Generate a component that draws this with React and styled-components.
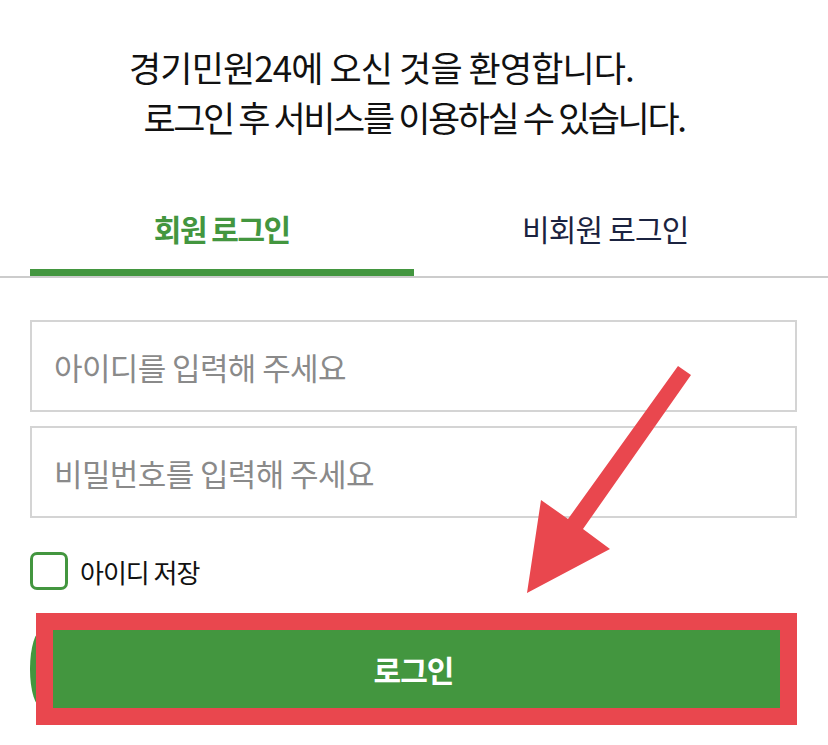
import React, { useState } from 'react';
import styled, { createGlobalStyle } from 'styled-components';

const GlobalStyle = createGlobalStyle`
  html, body {
    margin: 0;
    padding: 0;
    background: #ffffff;
  }
  body {
    font-family: "Noto Sans CJK KR", "Noto Sans", sans-serif;
    color: #111111;
  }
  * {
    box-sizing: border-box;
  }
`;

const Page = styled.div`
  position: relative;
  width: 828px;
  height: 745px;
  overflow: hidden;
  padding-top: 42px;
`;

const Welcome = styled.h1`
  margin: 0;
  font-size: 35px;
  font-weight: 400;
  line-height: 50px;
  text-align: center;
  color: #111111;
`;

const WelcomeLine = styled.span`
  display: block;
  padding-right: ${props => props.$shift || 0}px;
  letter-spacing: ${props => props.$spacing || '-2.4px'};
`;

const TabBar = styled.div`
  margin-top: 52px;
  border-bottom: 2px solid #cccccc;
`;

const TabList = styled.div`
  display: flex;
  margin: 0 31px 0 30px;
`;

const Tab = styled.button`
  flex: 1;
  height: 82px;
  padding: 0 0 8px;
  border: none;
  border-bottom: 7px solid ${props => (props.$active ? '#43963f' : 'transparent')};
  background: transparent;
  font-family: inherit;
  font-size: 30px;
  font-weight: ${props => (props.$active ? 700 : 400)};
  letter-spacing: ${props => (props.$active ? '-1.5px' : '-0.8px')};
  color: ${props => (props.$active ? '#43963f' : '#1b2340')};
  cursor: pointer;
`;

const Form = styled.form`
  display: flex;
  flex-direction: column;
  margin: 42px 31px 0 30px;
`;

const Field = styled.input`
  height: 92px;
  margin-bottom: 14px;
  padding: 0 22px;
  border: 2px solid #d4d4d4;
  border-radius: 0;
  font-family: inherit;
  font-size: 31px;
  letter-spacing: -0.6px;
  color: #111111;
  outline: none;

  &::placeholder {
    color: #8a8a8a;
  }
`;

const SaveRow = styled.label`
  display: flex;
  align-items: center;
  gap: 12px;
  margin-top: 20px;
  font-size: 26px;
  letter-spacing: -1px;
  color: #111111;
  cursor: pointer;
`;

const CheckBox = styled.span`
  width: 38px;
  height: 38px;
  border: 3px solid #43963f;
  border-radius: 7px;
  background: ${props => (props.$checked ? '#43963f' : '#ffffff')};
`;

const ButtonWrap = styled.div`
  position: relative;
  margin-top: 40px;
`;

const LoginButton = styled.button`
  display: block;
  width: 100%;
  height: 78px;
  border: none;
  border-radius: 12px / 39px;
  background: #43963f;
  font-family: inherit;
  font-size: 30px;
  font-weight: 700;
  letter-spacing: -1px;
  color: #ffffff;
  cursor: pointer;
`;

const HighlightFrame = styled.span`
  position: absolute;
  top: -17px;
  bottom: -17px;
  left: 6px;
  right: 0;
  border: 17px solid #e9474e;
  pointer-events: none;
`;

const ArrowLayer = styled.svg`
  position: absolute;
  top: 0;
  left: 0;
  pointer-events: none;
`;

export default function App() {
  const [tab, setTab] = useState('member');
  const [saveId, setSaveId] = useState(false);

  return (
    <>
      <GlobalStyle />
      <Page>
        <Welcome>
          <WelcomeLine $shift={65} $spacing="-0.9px">
            경기민원24에 오신 것을 환영합니다.
          </WelcomeLine>
          <WelcomeLine>로그인 후 서비스를 이용하실 수 있습니다.</WelcomeLine>
        </Welcome>

        <TabBar>
          <TabList>
            <Tab $active={tab === 'member'} onClick={() => setTab('member')}>
              회원 로그인
            </Tab>
            <Tab $active={tab === 'guest'} onClick={() => setTab('guest')}>
              비회원 로그인
            </Tab>
          </TabList>
        </TabBar>

        <Form onSubmit={e => e.preventDefault()}>
          <Field type="text" placeholder="아이디를 입력해 주세요" />
          <Field type="password" placeholder="비밀번호를 입력해 주세요" />
          <SaveRow onClick={() => setSaveId(!saveId)}>
            <CheckBox $checked={saveId} />
            아이디 저장
          </SaveRow>
          <ButtonWrap>
            <LoginButton type="submit">로그인</LoginButton>
            <HighlightFrame />
          </ButtonWrap>
        </Form>

        {/* 안내용 화살표 */}
        <ArrowLayer width="828" height="745" viewBox="0 0 828 745">
          <polygon
            points="678,366 691,375 583,529 610,549 527,593 541,500 568,519"
            fill="#e9474e"
          />
        </ArrowLayer>
      </Page>
    </>
  );
}
